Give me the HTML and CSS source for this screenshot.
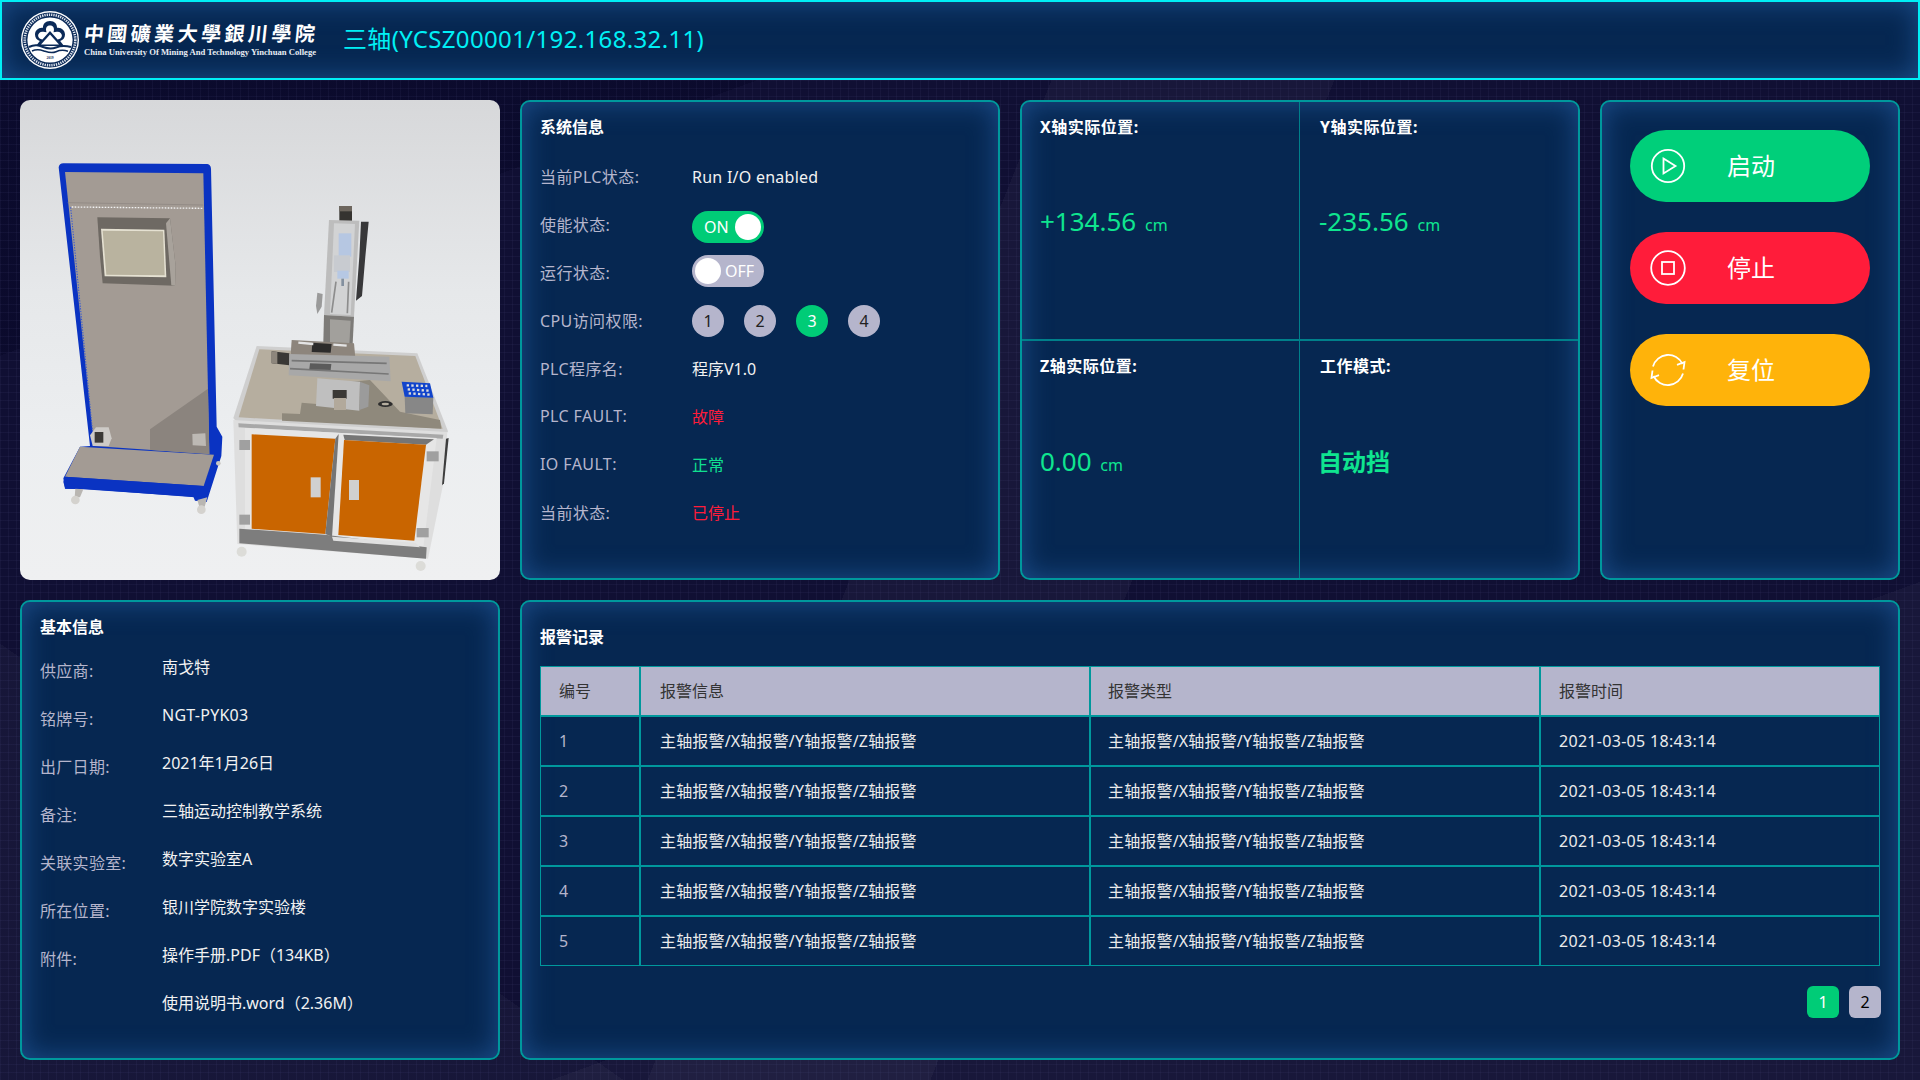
FILE: index.html
```html
<!DOCTYPE html>
<html lang="zh-CN">
<head>
<meta charset="utf-8">
<title>三轴</title>
<link rel="stylesheet" href="styles.css">
</head>
<body>
<header class="topbar">
  <svg class="emblem" viewBox="0 0 60 60" aria-hidden="true">
    <circle cx="30" cy="30" r="29" fill="#fff"/>
    <circle cx="30" cy="30" r="27.6" fill="#0b2a58"/>
    <circle cx="30" cy="30" r="25.3" fill="none" stroke="#dfe5ee" stroke-width="2.6" stroke-dasharray="1.3 1"/>
    <circle cx="30" cy="30" r="22.6" fill="#fff"/>
    <path d="M30 11c-4.600 0-7.200 3.300-7 6.800-4.300-.6-8 2.500-8 6.700 0 3.300 2 5.700 4.800 6.500L16 36h28l-3.800-5c2.800-.8 4.800-3.200 4.800-6.500 0-4.200-3.700-7.300-8-6.700.2-3.500-2.400-6.800-7-6.800z" fill="#0b2a58"/>
    <path d="M30 15.500c-2.700 0-4.300 2-3.900 4.900l.4 1.800-3.300-.5c-3-.4-5.100 1.400-5.100 3.900 0 2.200 1.800 3.600 4.300 3.900L30 21l7.600 8.500c2.500-.3 4.300-1.700 4.300-3.900 0-2.500-2.100-4.300-5.100-3.900l-3.300.5.400-1.800c.4-2.900-1.200-4.900-3.900-4.900z" fill="#fff"/>
    <path d="M30 24.500 21 34.500h18z" fill="#fff"/>
    <path d="M9 37c6-3 10-1.500 14 0s8 2.500 13 .5 9-2 15-.5" fill="none" stroke="#0b2a58" stroke-width="2"/>
    <path d="M12 41c6-2.500 9-1 13 .3s8 1.700 11 .4 7-2 12-.5" fill="none" stroke="#0b2a58" stroke-width="1.500"/>
    <text class="emblem-year" x="30" y="48.500" text-anchor="middle">2019</text>
  </svg>
  <div class="brand">
    <div class="brand-cn">中國礦業大學銀川學院</div>
    <div class="brand-en">China University Of Mining And Technology Yinchuan College</div>
  </div>
  <h1 class="device-title">三轴(YCSZ00001/192.168.32.11)</h1>
</header>

<main class="dashboard">
  <section class="photo">
    <svg class="machine" viewBox="60 30 1440 1440" aria-hidden="true">
      <!-- board -->
      <path d="M176 232 Q178 220 190 220 L622 222 Q632 224 633 236 L650 1010 L667 1040 L664 1098 L620 1236 L585 1232 L580 1220 L250 1198 L195 1196 L190 1165 L240 1070 L270 1068Z" fill="#0a33c2"/>
      <path d="M195 246 L610 250 L628 1092 L282 1068Z" fill="#a39b94"/>
      <path d="M450 1018 L624 896 L628 1092 L450 1080Z" fill="#8b847e"/>
      <path d="M215 351 L608 355" stroke="#f2f2f2" stroke-width="4" stroke-dasharray="5 4" fill="none"/>
      <path d="M212 352 L278 1030" stroke="#2d53d8" stroke-width="3" stroke-dasharray="4 4" fill="none"/>
      <path d="M203 338 L610 345" stroke="#8b847e" stroke-width="2" fill="none"/>
      <!-- monitor -->
      <path d="M292 382 L510 385 L527 528 L525 587 L308 580 L300 500Z" fill="#6e6963"/>
      <path d="M510 385 L527 528 L525 587 L514 586 L498 400Z" fill="#a8a29b"/>
      <path d="M303 416 L493 419 L499 562 L314 559Z" fill="#e5e1d2"/>
      <path d="M308 422 L489 424 L494 556 L319 554Z" fill="#b9b39f"/>
      <!-- motor and box on board -->
      <path d="M270 1036 L288 1012 L326 1012 L335 1045 L326 1068 L278 1068Z" fill="#cdcac6"/>
      <rect x="284" y="1026" width="26" height="32" fill="#3b3936"/>
      <path d="M577 1032 L616 1030 L618 1068 L578 1066Z" fill="#bdb9b4"/>
      <!-- base -->
      <path d="M240 1070 L642 1094 L611 1188 L195 1160Z" fill="#a39b94"/>
      <path d="M195 1160 L611 1188 L584 1222 L250 1196 L196 1196 L190 1176Z" fill="#0a33c2"/>
      <path d="M226 1196 L250 1198 L240 1222 L224 1222Z" fill="#b9b6b2"/>
      <circle cx="226" cy="1230" r="13" fill="#d4d2ce"/>
      <path d="M592 1230 L622 1222 L614 1250 L598 1250Z" fill="#b9b6b2"/>
      <circle cx="604" cy="1259" r="13" fill="#d4d2ce"/>
      <circle cx="655" cy="1120" r="7" fill="#c9c7c3"/>
      <!-- cabinet top -->
      <path d="M770 768 L1252 790 L1344 1024 L1332 1042 L712 1000 L700 984Z" fill="#cfcfcf"/>
      <path d="M778 778 L1246 798 L1328 1016 L716 982Z" fill="#b6ae9f"/>
      <path d="M846 970 L900 972 L905 938 L950 942 L1000 880 L1110 870 L1200 965 L1320 990 L1324 1016 L846 992Z" fill="#8f897c"/>
      <!-- cabinet front -->
      <path d="M700 990 L1342 1026 L1330 1180 L1284 1406 L712 1362Z" fill="#dedede"/>
      <path d="M715 1000 L1330 1034 L1328 1046 L716 1012Z" fill="#a8a8a8"/>
      <path d="M735 1014 L1310 1044 L1270 1372 L735 1326Z" fill="#e6e6e6"/>
      <path d="M755 1033 L1006 1046 L976 1332 L755 1316Z" fill="#c96500"/>
      <path d="M1006 1046 L1016 1032 L996 1340 L976 1332Z" fill="#757575"/>
      <path d="M1030 1034 L1302 1048 L1278 1064 L1034 1050Z" fill="#757575"/>
      <path d="M1032 1050 L1278 1064 L1243 1352 L1015 1335Z" fill="#c96500"/>
      <path d="M718 1316 L975 1334 L1280 1372 L1278 1406 L718 1360Z" fill="#7d7d7d"/>
      <path d="M996 1340 L1246 1358 L1260 1372 L1000 1352Z" fill="#e0e0e0"/>
      <rect x="932" y="1162" width="30" height="60" fill="#d0d0d0"/>
      <rect x="1047" y="1170" width="30" height="60" fill="#d0d0d0"/>
      <rect x="718" y="1050" width="32" height="30" fill="#a0a0a0"/>
      <rect x="718" y="1274" width="32" height="30" fill="#a0a0a0"/>
      <rect x="1280" y="1084" width="36" height="30" fill="#a0a0a0"/>
      <rect x="1250" y="1314" width="36" height="28" fill="#a0a0a0"/>
      <path d="M1338 1046 L1346 1044 L1332 1180 L1326 1186Z" fill="#3d3d3d"/>
      <circle cx="725" cy="1385" r="15" fill="#dcdcd8"/>
      <circle cx="1262" cy="1428" r="15" fill="#dcdcd8"/>
      <!-- axis assembly -->
      <g transform="translate(690 330)">
        <rect x="328" y="18" width="38" height="55" fill="#353330"/>
        <rect x="328" y="18" width="38" height="16" fill="#6d665e"/>
        <path d="M297 60 L388 62 L372 350 L282 345Z" fill="#bdbdbd"/>
        <path d="M312 70 L375 72 L362 345 L300 342Z" fill="#d2d3d4"/>
        <path d="M393 65 L416 65 L406 170 L396 288 L378 302 L388 170Z" fill="#38383a"/>
        <rect x="326" y="100" width="38" height="70" fill="#b6c7e2"/>
        <rect x="312" y="166" width="48" height="50" fill="#c8cbd0"/>
        <rect x="322" y="212" width="34" height="24" fill="#b6c8e4"/>
        <rect x="334" y="236" width="8" height="22" fill="#83909f"/>
        <path d="M318 245 L305 338 M356 245 L352 340" stroke="#8d8d8d" stroke-width="5" fill="none"/>
        <path d="M262 278 L278 282 L275 320 L262 342 L258 318Z" fill="#9a9a9a"/>
        <path d="M282 345 L372 350 L368 432 L280 426Z" fill="#7d7b78"/>
        <path d="M300 358 L362 362 L358 432 L300 428Z" fill="#a2a09c"/>
        <path d="M125 454 L178 460 L178 496 L125 490Z" fill="#3a3835"/>
        <path d="M125 454 L142 456 L142 492 L125 490Z" fill="#8d867c"/>
        <path d="M185 420 L372 430 L376 474 L182 466Z" fill="#8d857c"/>
        <path d="M247 428 L305 432 L302 458 L245 456Z" fill="#2d2c2b"/>
        <path d="M205 428 L250 432 M310 434 L350 437" stroke="#e4e4e4" stroke-width="7" fill="none"/>
        <path d="M178 462 L478 470 L482 544 L176 526Z" fill="#a8a8a8"/>
        <path d="M185 482 L470 490 M180 506 L476 522" stroke="#777" stroke-width="5" fill="none"/>
        <path d="M240 490 L304 492 L302 510 L238 508Z" fill="#5b5b5b"/>
        <path d="M262 535 L390 545 L388 632 L258 618Z" fill="#bfbfbf"/>
        <path d="M390 545 L418 556 L415 620 L388 630Z" fill="#9b9b9b"/>
        <rect x="308" y="570" width="42" height="26" fill="#3a3835"/>
        <rect x="312" y="594" width="36" height="36" fill="#b2a99b"/>
        <ellipse cx="466" cy="612" rx="22" ry="9" fill="#2d2d2d"/>
        <ellipse cx="466" cy="612" rx="11" ry="4" fill="#b6ae9f"/>
        <path d="M524 590 L610 592 L608 643 L526 640Z" fill="#878787"/>
        <path d="M515 545 L600 550 L610 593 L524 590Z" fill="#1144cc"/>
        <path d="M530 556 L592 558 M533 568 L596 572 M536 580 L600 584" stroke="#ddd" stroke-width="7" stroke-dasharray="7 7" fill="none"/>
      </g>
    </svg>
  </section>

  <section class="panel info-panel">
    <h2 class="panel-title">系统信息</h2>
    <div class="sys-row"><span class="row-label">当前PLC状态:</span><span class="row-value latin">Run I/O enabled</span></div>
    <div class="sys-row"><span class="row-label">使能状态:</span><span class="toggle toggle-on"><span class="toggle-text">ON</span><span class="knob"></span></span></div>
    <div class="sys-row"><span class="row-label">运行状态:</span><span class="toggle toggle-off"><span class="knob"></span><span class="toggle-text">OFF</span></span></div>
    <div class="sys-row"><span class="row-label">CPU访问权限:</span>
      <span class="dots"><span class="dot">1</span><span class="dot">2</span><span class="dot dot-active">3</span><span class="dot">4</span></span>
    </div>
    <div class="sys-row"><span class="row-label">PLC程序名:</span><span class="row-value">程序V1.0</span></div>
    <div class="sys-row"><span class="row-label">PLC FAULT:</span><span class="row-value text-red">故障</span></div>
    <div class="sys-row"><span class="row-label">IO FAULT:</span><span class="row-value text-green">正常</span></div>
    <div class="sys-row"><span class="row-label">当前状态:</span><span class="row-value text-red">已停止</span></div>
  </section>

  <section class="panel axis-panel">
    <div class="axis-cell cell-left cell-top"><h2 class="panel-title axis-title">X轴实际位置:</h2><div class="axis-value">+134.56 <small>cm</small></div></div>
    <div class="axis-cell cell-right cell-top"><h2 class="panel-title axis-title">Y轴实际位置:</h2><div class="axis-value">-235.56 <small>cm</small></div></div>
    <div class="axis-cell cell-left"><h2 class="panel-title axis-title">Z轴实际位置:</h2><div class="axis-value">0.00 <small>cm</small></div></div>
    <div class="axis-cell cell-right"><h2 class="panel-title axis-title">工作模式:</h2><div class="axis-value mode-value">自动挡</div></div>
  </section>

  <section class="panel action-panel">
    <button class="action action-start">
      <svg class="action-icon" viewBox="0 0 36 36"><circle cx="18" cy="18" r="16.200"/><path d="M13.500 10.500 L25.500 18 L13.500 25.500Z"/></svg>
      <span class="action-text">启动</span>
    </button>
    <button class="action action-stop">
      <svg class="action-icon" viewBox="0 0 36 36"><circle cx="18" cy="18" r="16.800"/><rect x="12" y="12" width="12" height="12"/></svg>
      <span class="action-text">停止</span>
    </button>
    <button class="action action-reset">
      <svg class="action-icon" viewBox="0 0 36 36"><path d="M3 14.500A15.800 15.800 0 0 1 32.500 12M33 21.500A15.800 15.800 0 0 1 3.500 24"/><path d="M33.500 17.500 L34.500 10 L27 12.800M2.500 18.500 L1.500 26 L9 23.200"/></svg>
      <span class="action-text">复位</span>
    </button>
  </section>

  <section class="panel basic-panel">
    <h2 class="panel-title">基本信息</h2>
    <div class="info-list">
      <div class="info-row"><span class="info-label">供应商:</span><span class="info-value">南戈特</span></div>
      <div class="info-row"><span class="info-label">铭牌号:</span><span class="info-value latin">NGT-PYK03</span></div>
      <div class="info-row"><span class="info-label">出厂日期:</span><span class="info-value">2021年1月26日</span></div>
      <div class="info-row"><span class="info-label">备注:</span><span class="info-value">三轴运动控制教学系统</span></div>
      <div class="info-row"><span class="info-label">关联实验室:</span><span class="info-value">数字实验室A</span></div>
      <div class="info-row"><span class="info-label">所在位置:</span><span class="info-value">银川学院数字实验楼</span></div>
      <div class="info-row"><span class="info-label">附件:</span><span class="info-value">操作手册.PDF（134KB）</span></div>
      <div class="info-row"><span class="info-label"></span><span class="info-value">使用说明书.word（2.36M）</span></div>
    </div>
  </section>

  <section class="panel alarm-panel">
    <h2 class="panel-title alarm-title">报警记录</h2>
    <table class="alarm-table">
      <thead><tr><th class="col-id">编号</th><th class="col-info">报警信息</th><th class="col-info">报警类型</th><th>报警时间</th></tr></thead>
      <tbody>
        <tr><td class="cell-id">1</td><td>主轴报警/X轴报警/Y轴报警/Z轴报警</td><td>主轴报警/X轴报警/Y轴报警/Z轴报警</td><td class="cell-time">2021-03-05 18:43:14</td></tr>
        <tr><td class="cell-id">2</td><td>主轴报警/X轴报警/Y轴报警/Z轴报警</td><td>主轴报警/X轴报警/Y轴报警/Z轴报警</td><td class="cell-time">2021-03-05 18:43:14</td></tr>
        <tr><td class="cell-id">3</td><td>主轴报警/X轴报警/Y轴报警/Z轴报警</td><td>主轴报警/X轴报警/Y轴报警/Z轴报警</td><td class="cell-time">2021-03-05 18:43:14</td></tr>
        <tr><td class="cell-id">4</td><td>主轴报警/X轴报警/Y轴报警/Z轴报警</td><td>主轴报警/X轴报警/Y轴报警/Z轴报警</td><td class="cell-time">2021-03-05 18:43:14</td></tr>
        <tr><td class="cell-id">5</td><td>主轴报警/X轴报警/Y轴报警/Z轴报警</td><td>主轴报警/X轴报警/Y轴报警/Z轴报警</td><td class="cell-time">2021-03-05 18:43:14</td></tr>
      </tbody>
    </table>
    <div class="pager"><span class="page page-active">1</span><span class="page">2</span></div>
  </section>
</main>
</body>
</html>
```
FILE: styles.css
```css
* { box-sizing: border-box; }
html, body { margin: 0; padding: 0; }
body {
  width: 1920px;
  height: 1080px;
  overflow: hidden;
  font-family: "Noto Sans", "Noto Sans CJK SC", sans-serif;
  font-size: 16px;
  color: #fff;
  background-color: #100f33;
  background-image:
    linear-gradient(rgba(110,110,170,.08) 1px, transparent 1px),
    linear-gradient(90deg, rgba(110,110,170,.08) 1px, transparent 1px),
    linear-gradient(112deg, transparent 46%, rgba(255,255,255,.035) 46%, rgba(255,255,255,.035) 58%, transparent 58%),
    linear-gradient(160deg, rgba(0,0,30,.3) 20%, transparent 20%, transparent 72%, rgba(255,255,255,.035) 72%),
    linear-gradient(35deg, rgba(255,255,255,.03) 18%, transparent 18%);
  background-size: 8px 8px, 8px 8px, auto, auto, auto;
}
.topbar {
  height: 80px;
  border: 2px solid #00eef5;
  background: #062751;
  box-shadow: inset 0 0 28px #1c4e8c;
  display: flex;
  align-items: center;
  padding-left: 18px;
}
.emblem { width: 60px; height: 60px; flex: none; }
.emblem-year { font: bold 3.600px "Liberation Serif", serif; fill: #0b2a58; }
.brand { margin-left: 4px; width: 240px; flex: none; }
.brand-cn {
  font: 700 20px/22px "Noto Sans CJK TC", sans-serif;
  letter-spacing: 3.450px;
  white-space: nowrap;
  transform: skewX(-6deg);
}
.brand-en {
  font: 700 8.650px/11px "Liberation Serif", serif;
  white-space: nowrap;
  margin-top: 3px;
  color: #e8edf4;
}
.device-title {
  margin: 0 0 0 19px;
  padding-bottom: 6px;
  font-size: 24px;
  font-weight: 400;
  letter-spacing: .35px;
  color: #00f0f5;
  white-space: nowrap;
}
.dashboard {
  display: grid;
  grid-template-columns: 480px 480px 560px 300px;
  grid-template-rows: 480px 460px;
  gap: 20px;
  padding: 20px;
}
.panel {
  border: 2px solid #00989c;
  border-radius: 10px;
  background: #062751;
  box-shadow: inset 0 0 28px #1c4e8c;
}
.panel-title {
  margin: 0;
  font-size: 16px;
  font-weight: 700;
  line-height: 22px;
}
.photo {
  border-radius: 10px;
  overflow: hidden;
  background: linear-gradient(#d7d8da, #e6e8ea 40%, #eceef0 70%, #eff0f1);
}
.machine { display: block; width: 480px; height: 480px; filter: blur(.35px); }
.info-panel { padding: 14px 18px; }
.info-panel .panel-title { margin-bottom: 15px; }
.sys-row { display: flex; align-items: center; height: 48px; }
.row-label { width: 152px; flex: none; color: #b5b5cc; padding-bottom: 2px; letter-spacing: .4px; }
.row-value { color: #f2f2f2; padding-bottom: 2px; }
.row-value.latin { letter-spacing: .25px; padding-bottom: 0; }
.info-value.latin { letter-spacing: .25px; }
.text-red { color: #ff1c3a; }
.text-green { color: #10e090; }
.toggle {
  width: 72px;
  height: 32px;
  border-radius: 16px;
  display: flex;
  align-items: center;
  padding: 0 3px;
  color: #fff;
}
.toggle-on { background: #00cc77; justify-content: space-between; padding-left: 12px; margin-top: 4px; }
.toggle-off { background: #b5b5cc; justify-content: space-between; padding-right: 10px; margin-bottom: 4px; }
.knob { width: 26px; height: 26px; border-radius: 50%; background: #fff; }
.dots { display: flex; gap: 20px; }
.dot {
  width: 32px;
  height: 32px;
  border-radius: 50%;
  background: #b5b5cc;
  color: #222;
  display: flex;
  align-items: center;
  justify-content: center;
}
.dot-active { background: #00cc77; color: #fff; }
.axis-panel {
  display: grid;
  grid-template-columns: 278px 278px;
  grid-template-rows: 239px 237px;
}
.axis-cell { padding: 14px 18px; }
.cell-left { border-right: 1px solid #00808a; }
.cell-right { padding-left: 20px; }
.cell-top { border-bottom: 2px solid #00808a; }
.axis-title { letter-spacing: .5px; }
.axis-value {
  margin-top: 64px;
  line-height: 40px;
  font-size: 26px;
  color: #0fe58f;
  white-space: nowrap;
}
.cell-right .axis-value { margin-left: -1px; }
.cell-top .axis-value { margin-top: 63px; }
.axis-value small { font-size: 16px; margin-left: 2px; }
.cell-right .axis-value.mode-value { font-size: 24px; font-weight: 700; margin-top: 65px; margin-left: -2px; }
.action-panel {
  padding: 28px 28px;
  display: flex;
  flex-direction: column;
  gap: 30px;
}
.action {
  height: 72px;
  width: 240px;
  border: 0;
  border-radius: 36px;
  color: #fff;
  font: inherit;
  font-size: 24px;
  display: flex;
  align-items: center;
  gap: 41px;
  padding: 0 0 0 20px;
}
.action-text { padding-bottom: 4px; }
.action-start { background: #00cf7a; }
.action-stop { background: #ff1c3a; }
.action-reset { background: #ffb30a; }
.action-icon {
  width: 36px;
  height: 36px;
  flex: none;
  fill: none;
  stroke: #fff;
  stroke-width: 1.800;
}
.basic-panel { padding: 14px 18px; }
.info-list { margin-top: 5px; }
.info-row { display: flex; height: 48px; line-height: 48px; }
.info-label { width: 122px; flex: none; color: #b5b5cc; padding-top: 4px; letter-spacing: .3px; }
.info-value { color: #f2f2f2; white-space: nowrap; }
.alarm-panel { grid-column: 2 / span 3; padding: 24px 18px 0; }
.alarm-title { margin-bottom: 18px; }
.alarm-table {
  width: 1340px;
  border-collapse: separate;
  border-spacing: 0;
  table-layout: fixed;
}
.alarm-table th, .alarm-table td {
  height: 50px;
  border: 1px solid #00989c;
  padding: 0 0 2px 19px;
  font-weight: 400;
  text-align: left;
  white-space: nowrap;
  letter-spacing: .17px;
}
.alarm-table th:nth-child(1), .alarm-table td:nth-child(1) { padding-left: 18px; }
.alarm-table th:nth-child(3), .alarm-table td:nth-child(3) { padding-left: 17px; }
.alarm-table th:nth-child(4), .alarm-table td:nth-child(4) { padding-left: 18px; }
.alarm-table th { background: #b5b5cc; color: #333; letter-spacing: 0; }
.alarm-table td { color: #ececec; }
.alarm-table td.cell-id { color: #b5b5cc; padding-bottom: 0; }
.alarm-table td.cell-time { letter-spacing: .3px; padding-bottom: 0; }
.col-id { width: 100px; }
.col-info { width: 450px; }
.pager {
  display: flex;
  justify-content: flex-end;
  gap: 10px;
  margin-top: 20px;
  margin-right: -1px;
}
.page {
  width: 32px;
  height: 32px;
  border-radius: 6px;
  background: #b5b5cc;
  color: #000;
  display: flex;
  align-items: center;
  justify-content: center;
}
.page-active { background: #00cc77; color: #fff; }
```
